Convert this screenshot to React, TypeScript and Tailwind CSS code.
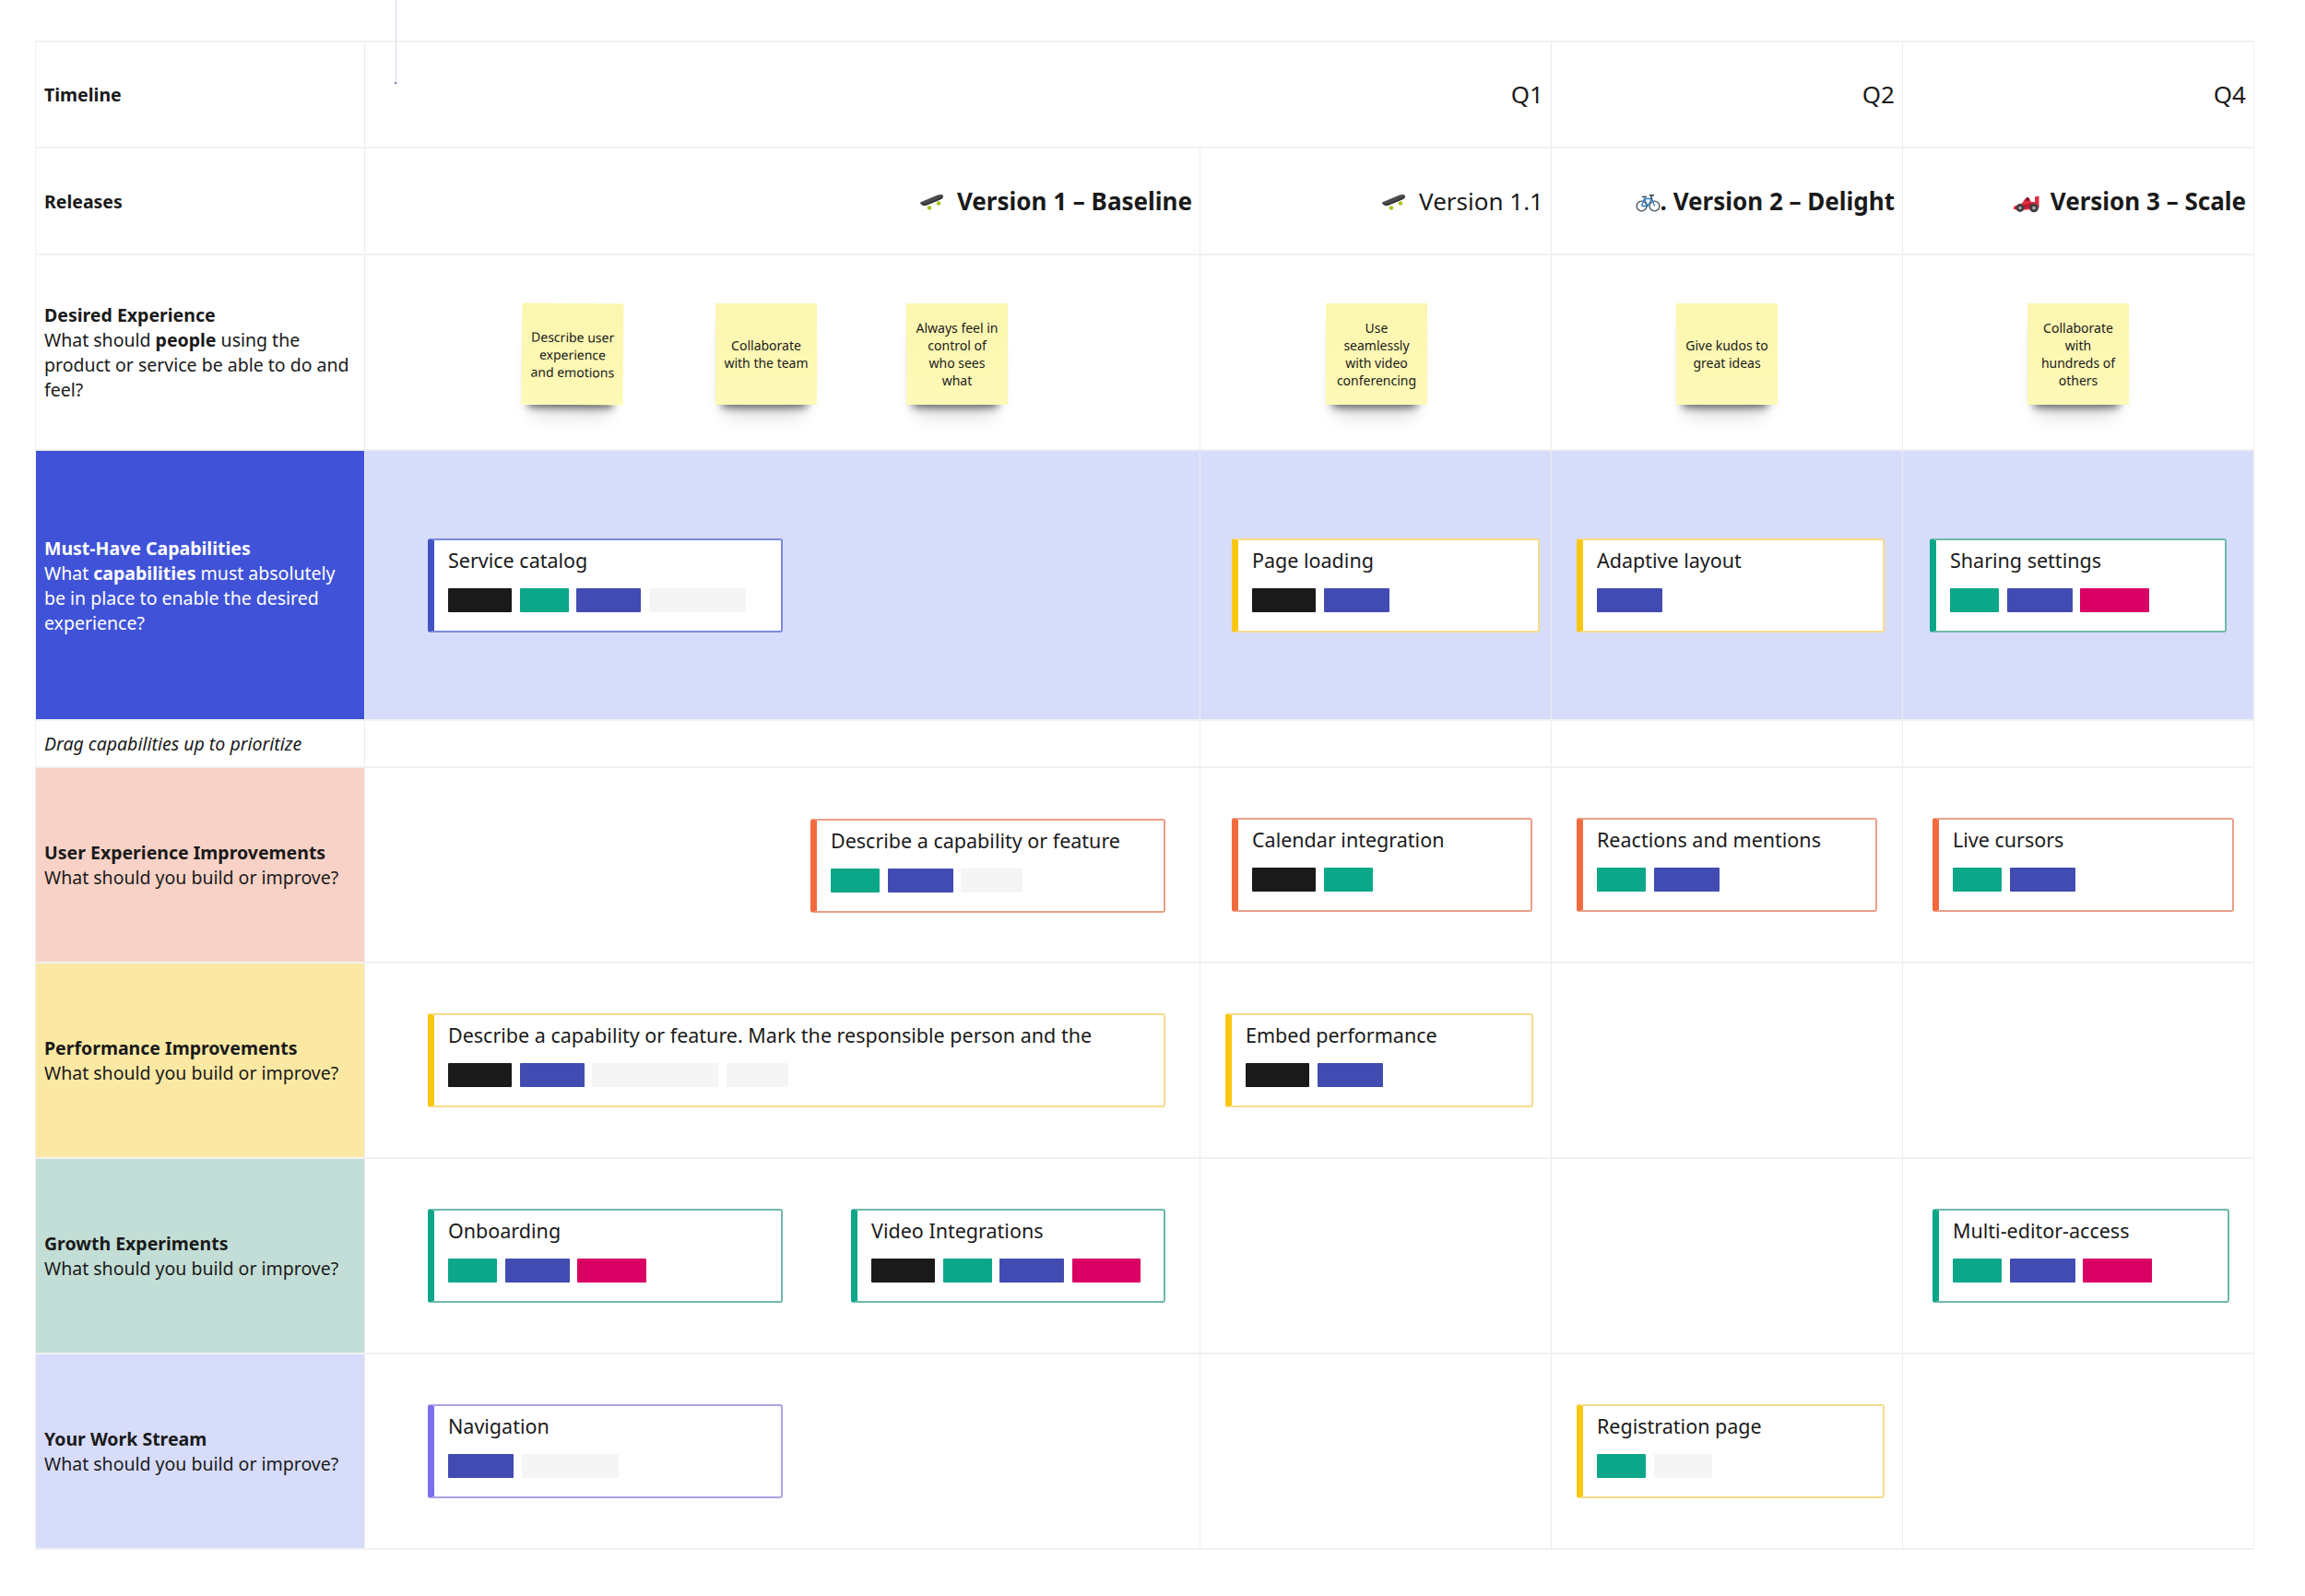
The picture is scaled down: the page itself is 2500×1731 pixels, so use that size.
const FONT = "font-['Noto_Sans','Open_Sans',sans-serif]";

const TAG = {
  black: 'bg-[#1a1a1a]',
  teal: 'bg-[#0ca789]',
  indigo: 'bg-[#414bb2]',
  pink: 'bg-[#da0063]',
  empty: 'bg-[#f5f5f5]',
};

const ACCENT = {
  blue: 'border-[#7a8bdc] border-l-[#4153c4]',
  yellow: 'border-[#f5dc8b] border-l-[#fac710]',
  teal: 'border-[#6db9a9] border-l-[#0ca789]',
  orange: 'border-[#ea9f88] border-l-[#f26b3f]',
  purple: 'border-[#a9a2e3] border-l-[#7b6ff0]',
};

type Tag = { color: keyof typeof TAG; width: string };

const Card = ({
  title,
  accent,
  tags,
  width,
  className = '',
}: {
  title: string;
  accent: keyof typeof ACCENT;
  tags: Tag[];
  width: string;
  className?: string;
}) => (
  <div
    className={`flex h-[102px] shrink-0 flex-col rounded-[3px] border-2 border-l-[7px] bg-white pl-[15px] pt-[6px] ${ACCENT[accent]} ${width} ${className}`}
  >
    <div className="h-[32px] whitespace-nowrap text-[21.5px] leading-[32px] text-[#1a1a1a]">{title}</div>
    <div className="mt-[14px] flex gap-[8.5px]">
      {tags.map((tag, i) => (
        <div key={i} className={`h-[26px] rounded-[1px] ${TAG[tag.color]} ${tag.width}`} />
      ))}
    </div>
  </div>
);

const Sticky = ({ text, className = '' }: { text: string; className?: string }) => (
  <div
    className={`mt-[4px] flex h-[110px] w-[110px] shrink-0 items-center justify-center bg-gradient-to-b from-[#fcf6b0] to-[#fef9b6] px-[6px] text-center text-[14px] leading-[19px] text-[#1a1a1a] shadow-[-2px_12px_9px_-9px_rgba(0,0,0,0.6),-2px_26px_20px_-14px_rgba(0,0,0,0.14)] ${className}`}
  >
    {text}
  </div>
);

const Skateboard = () => (
  <svg width="27" height="19" viewBox="0 0 27 19" className="mt-[3px] shrink-0">
    <circle cx="11" cy="15.5" r="2.2" fill="#a3c61a" />
    <circle cx="21" cy="10.5" r="2.2" fill="#a3c61a" />
    <path d="M1 9.5 L20 1.5 C23 0.5 26 0.8 26 3 C26 5 24 5.8 22 6.8 L8 12.5 C5 13.5 2 12.5 1 9.5 Z" fill="#4a4a4a" />
    <path d="M1 9.5 C2 12.5 5 13.5 8 12.5 L22 6.8 C24 5.8 26 5 26 3 L22 5 L8 11 C5 12 3 11 1 9.5 Z" fill="#2e2e2e" />
  </svg>
);

const Bicycle = () => (
  <svg width="27" height="20" viewBox="0 0 27 20" fill="none" className="mt-[4px] shrink-0">
    <circle cx="6.5" cy="13.5" r="5.4" stroke="#46535f" strokeWidth="1.3" />
    <circle cx="20.5" cy="13.5" r="5.4" stroke="#46535f" strokeWidth="1.3" />
    <path d="M6.5 13.5 L9.5 5.5 L17.5 5.5 L20.5 13.5 M9.5 5.5 L13 13.5 L17.5 5.5 M6.5 13.5 H13" stroke="#2f78bd" strokeWidth="1.3" />
    <path d="M7.5 3.5 H11.5 M16.5 2 L17.5 5.5 M15.5 1.8 H19.5" stroke="#33414e" strokeWidth="1.4" strokeLinecap="round" />
  </svg>
);

const RaceCar = () => (
  <svg width="29" height="20" viewBox="0 0 29 20" className="mt-[6px] shrink-0">
    <path d="M1 13 L10 9.5 L13 5 L18 4 L20 8 L24 8 L24 2.5 L28.5 1.5 L28.5 14 L22 16 L8 17 L1 16 Z" fill="#dd2e44" />
    <path d="M12 11 L20 9 L21 14 L12 15 Z" fill="#be1931" />
    <circle cx="16" cy="5" r="2" fill="#7d1522" />
    <circle cx="8" cy="14.5" r="4.4" fill="#3f3f3f" />
    <circle cx="8" cy="14.5" r="1.7" fill="#a8a8a8" />
    <circle cx="23" cy="14.5" r="4.8" fill="#3f3f3f" />
    <circle cx="23" cy="14.5" r="1.9" fill="#a8a8a8" />
  </svg>
);

const Label = ({ className = '', children }: { className?: string; children: React.ReactNode }) => (
  <div className={`flex items-center pl-[9px] pr-[8px] text-[19.5px] leading-[27px] text-[#1a1a1a] ${className}`}>
    <div>{children}</div>
  </div>
);

// one row: label cell, then the four timeline columns
const Row = ({
  height,
  label,
  cells,
  bg = '',
  mergeFirst = false,
}: {
  height: string;
  label: React.ReactNode;
  cells: React.ReactNode[];
  bg?: string;
  mergeFirst?: boolean;
}) => (
  <div className={`grid grid-cols-[356px_906px_381px_381px_381px] border-b-2 border-[#f1f1f1] ${height} ${bg}`}>
    {label}
    {cells.map((cell, i) => (
      <div
        key={i}
        className={`flex min-w-0 items-center ${mergeFirst && i === 1 ? '' : 'border-l border-[#ececec]'}`}
      >
        {cell}
      </div>
    ))}
  </div>
);

const WORK_TEXT = 'What should you build or improve?';

const Release = ({ children }: { children: React.ReactNode }) => (
  <div className="flex w-full items-center justify-end pr-[8px] text-[26px] text-[#1a1a1a]">{children}</div>
);

const Quarter = ({ children }: { children: React.ReactNode }) => (
  <div className="w-full pr-[8px] text-right text-[26px] text-[#1a1a1a]">{children}</div>
);

export default function App() {
  return (
    <div className={`relative h-[1731px] w-[2500px] overflow-hidden bg-white pl-[38px] pt-[44px] ${FONT}`}>
      {/* stray connector line above the board */}
      <div className="absolute left-[429px] top-0 h-[90px] w-px bg-[#d9dbe8]" />
      <div className="absolute left-[428px] top-[89px] h-[2px] w-[2px] bg-[#6b74b8]" />

      <div className="w-[2407px] border-l border-r border-t-2 border-[#f1f1f1]">
        <Row
          height="h-[115px]"
          mergeFirst
          label={<Label className="font-bold">Timeline</Label>}
          cells={[
            <div className="w-full" />,
            <Quarter>Q1</Quarter>,
            <Quarter>Q2</Quarter>,
            <Quarter>Q4</Quarter>,
          ]}
        />
        <Row
          height="h-[116px]"
          label={<Label className="font-bold">Releases</Label>}
          cells={[
            <Release>
              <Skateboard />
              <span className="ml-[14px] font-bold">Version 1 – Baseline</span>
            </Release>,
            <Release>
              <Skateboard />
              <span className="ml-[14px]">Version 1.1</span>
            </Release>,
            <Release>
              <Bicycle />
              <span className="font-bold">. Version 2 – Delight</span>
            </Release>,
            <Release>
              <RaceCar />
              <span className="ml-[12px] font-bold">Version 3 – Scale</span>
            </Release>,
          ]}
        />
        <Row
          height="h-[212px]"
          label={
            <Label>
              <b>Desired Experience</b>
              <br />
              What should <b>people</b> using the product or service be able to do and feel?
            </Label>
          }
          cells={[
            <div className="flex w-full pl-[170px]">
              <Sticky text="Describe user experience and emotions" className="rotate-[0.5deg]" />
              <Sticky text="Collaborate with the team" className="ml-[100px]" />
              <Sticky text="Always feel in control of who sees what" className="ml-[97px] !px-[9px]" />
            </div>,
            <Sticky text="Use seamlessly with video conferencing" className="ml-[136px]" />,
            <Sticky text="Give kudos to great ideas" className="ml-[135px]" />,
            <Sticky text="Collaborate with hundreds of others" className="ml-[135px] !px-[10px]" />,
          ]}
        />
        <Row
          height="h-[293px]"
          bg="bg-[#d7dcfb]"
          label={
            <Label className="bg-[#4053d8] text-white">
              <b>Must-Have Capabilities</b>
              <br />
              What <b>capabilities</b> must absolutely be in place to enable the desired experience?
            </Label>
          }
          cells={[
            <Card
              className="ml-[68px]"
              title="Service catalog"
              accent="blue"
              width="w-[385px]"
              tags={[
                { color: 'black', width: 'w-[69px]' },
                { color: 'teal', width: 'w-[53px]' },
                { color: 'indigo', width: 'w-[70px]' },
                { color: 'empty', width: 'w-[105px]' },
              ]}
            />,
            <Card
              className="ml-[34px]"
              title="Page loading"
              accent="yellow"
              width="w-[334px]"
              tags={[
                { color: 'black', width: 'w-[69px]' },
                { color: 'indigo', width: 'w-[71px]' },
              ]}
            />,
            <Card
              className="ml-[27px]"
              title="Adaptive layout"
              accent="yellow"
              width="w-[334px]"
              tags={[{ color: 'indigo', width: 'w-[71px]' }]}
            />,
            <Card
              className="ml-[29px]"
              title="Sharing settings"
              accent="teal"
              width="w-[322px]"
              tags={[
                { color: 'teal', width: 'w-[53px]' },
                { color: 'indigo', width: 'w-[71px]' },
                { color: 'pink', width: 'w-[75px]' },
              ]}
            />,
          ]}
        />
        <Row
          height="h-[51px]"
          label={<Label className="italic">Drag capabilities up to prioritize</Label>}
          cells={[<div />, <div />, <div />, <div />]}
        />
        <Row
          height="h-[212px]"
          label={
            <Label className="bg-[#f8d2c6]">
              <b>User Experience Improvements</b>
              <br />
              {WORK_TEXT}
            </Label>
          }
          cells={[
            <Card
              className="ml-[483px] mt-[2px]"
              title="Describe a capability or feature"
              accent="orange"
              width="w-[385px]"
              tags={[
                { color: 'teal', width: 'w-[53px]' },
                { color: 'indigo', width: 'w-[71px]' },
                { color: 'empty', width: 'w-[67px]' },
              ]}
            />,
            <Card
              className="ml-[34px]"
              title="Calendar integration"
              accent="orange"
              width="w-[326px]"
              tags={[
                { color: 'black', width: 'w-[69px]' },
                { color: 'teal', width: 'w-[53px]' },
              ]}
            />,
            <Card
              className="ml-[27px]"
              title="Reactions and mentions"
              accent="orange"
              width="w-[326px]"
              tags={[
                { color: 'teal', width: 'w-[53px]' },
                { color: 'indigo', width: 'w-[71px]' },
              ]}
            />,
            <Card
              className="ml-[32px]"
              title="Live cursors"
              accent="orange"
              width="w-[327px]"
              tags={[
                { color: 'teal', width: 'w-[53px]' },
                { color: 'indigo', width: 'w-[71px]' },
              ]}
            />,
          ]}
        />
        <Row
          height="h-[212px]"
          label={
            <Label className="bg-[#fbe8a2]">
              <b>Performance Improvements</b>
              <br />
              {WORK_TEXT}
            </Label>
          }
          cells={[
            <Card
              className="ml-[68px]"
              title="Describe a capability or feature. Mark the responsible person and the"
              accent="yellow"
              width="w-[800px]"
              tags={[
                { color: 'black', width: 'w-[69px]' },
                { color: 'indigo', width: 'w-[70px]' },
                { color: 'empty', width: 'w-[137px]' },
                { color: 'empty', width: 'w-[67px]' },
              ]}
            />,
            <Card
              className="ml-[27px]"
              title="Embed performance"
              accent="yellow"
              width="w-[334px]"
              tags={[
                { color: 'black', width: 'w-[69px]' },
                { color: 'indigo', width: 'w-[71px]' },
              ]}
            />,
            <div />,
            <div />,
          ]}
        />
        <Row
          height="h-[212px]"
          label={
            <Label className="bg-[#c3ded6]">
              <b>Growth Experiments</b>
              <br />
              {WORK_TEXT}
            </Label>
          }
          cells={[
            <div className="ml-[68px] flex w-[800px] justify-between">
              <Card
                title="Onboarding"
                accent="teal"
                width="w-[385px]"
                tags={[
                  { color: 'teal', width: 'w-[53px]' },
                  { color: 'indigo', width: 'w-[70px]' },
                  { color: 'pink', width: 'w-[75px]' },
                ]}
              />
              <Card
                title="Video Integrations"
                accent="teal"
                width="w-[341px]"
                tags={[
                  { color: 'black', width: 'w-[69px]' },
                  { color: 'teal', width: 'w-[53px]' },
                  { color: 'indigo', width: 'w-[70px]' },
                  { color: 'pink', width: 'w-[74px]' },
                ]}
              />
            </div>,
            <div />,
            <div />,
            <Card
              className="ml-[32px]"
              title="Multi-editor-access"
              accent="teal"
              width="w-[322px]"
              tags={[
                { color: 'teal', width: 'w-[53px]' },
                { color: 'indigo', width: 'w-[71px]' },
                { color: 'pink', width: 'w-[75px]' },
              ]}
            />,
          ]}
        />
        <Row
          height="h-[212px]"
          label={
            <Label className="bg-[#d7dcfb]">
              <b>Your Work Stream</b>
              <br />
              {WORK_TEXT}
            </Label>
          }
          cells={[
            <Card
              className="ml-[68px]"
              title="Navigation"
              accent="purple"
              width="w-[385px]"
              tags={[
                { color: 'indigo', width: 'w-[71px]' },
                { color: 'empty', width: 'w-[105px]' },
              ]}
            />,
            <div />,
            <Card
              className="ml-[27px]"
              title="Registration page"
              accent="yellow"
              width="w-[334px]"
              tags={[
                { color: 'teal', width: 'w-[53px]' },
                { color: 'empty', width: 'w-[63px]' },
              ]}
            />,
            <div />,
          ]}
        />
      </div>
    </div>
  );
}
